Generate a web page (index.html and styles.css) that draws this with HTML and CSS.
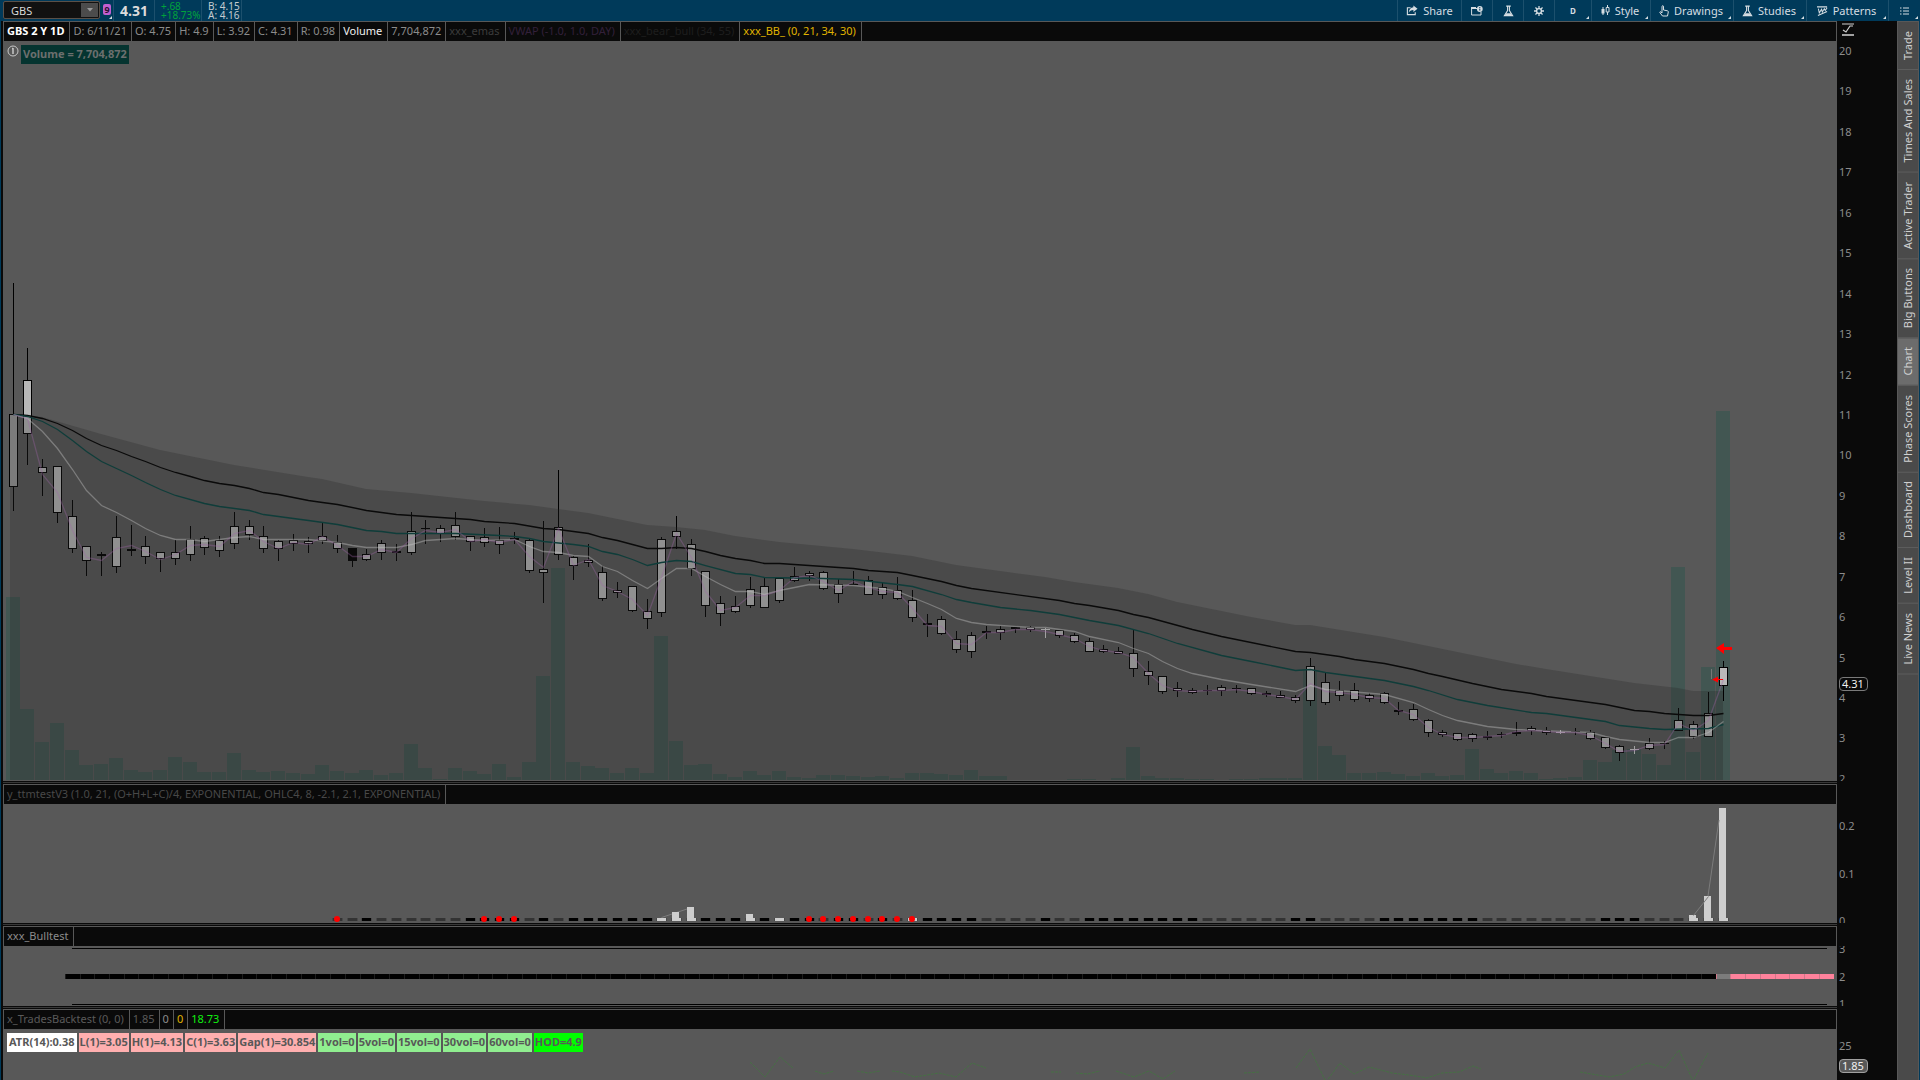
FILE: index.html
```html
<!DOCTYPE html>
<html lang="en">
<head>
    <meta charset="UTF-8">
    <meta name="viewport" content="width=device-width, initial-scale=1.0">
    <title>GBS Chart</title>
    <link rel="stylesheet" href="styles.css">
</head>
<body>
    <header class="toolbar">
        <div class="symbol-box">
            <input type="text" id="symbol" value="GBS" aria-label="Symbol">
            <button class="symbol-drop" aria-label="Recent symbols">
                <svg width="6" height="4" viewBox="0 0 6 4"><path d="M0 0h6L3 3.500z" fill="#9a9a9a"/></svg>
            </button>
        </div>
        <button class="link-color corner" aria-label="Link group 9"><span>9</span></button>
        <div class="quote last">4.31</div>
        <div class="quote change"><span>+.68</span><span>+18.73%</span></div>
        <div class="quote bidask"><span>B: 4.15</span><span>A: 4.16</span></div>

        <nav class="tools">
            <button class="tool share">
                <svg width="12" height="11" viewBox="0 0 13 11"><path d="M5 2.500H1.500v7.500h8.500V7.500" fill="none" stroke="#d5dde2" stroke-width="1.200"/><path d="M8 0l4.500 3.500L8 7V5C5.500 5 4 6 3 8c0-3.500 2-5.500 5-6z" fill="#d5dde2"/></svg>
                Share
            </button>
            <button class="tool" aria-label="Detach">
                <svg width="12" height="10" viewBox="0 0 12 10"><path d="M6 2.500H.6v6.500h9.400V6" fill="none" stroke="#d5dde2"/><path d="M0 1h5v2H0z" fill="#d5dde2"/><circle cx="8.800" cy="3" r="2.900" fill="#d5dde2"/><path d="M8.800 1v1M8.800 2.600v2" stroke="#003a5a"/></svg>
            </button>
            <button class="tool" aria-label="Edit studies">
                <svg width="11" height="12" viewBox="0 0 12 12"><path d="M3.500.7h5M5 1v4.500L1.500 11h9L7 5.500V1" fill="none" stroke="#d5dde2" stroke-width="1.200"/><path d="M3.600 8.500h4.800l2.100 3h-9z" fill="#d5dde2"/></svg>
            </button>
            <button class="tool" aria-label="Settings">
                <svg width="10" height="10" viewBox="0 0 11 11"><path d="M5.500 0v11M0 5.500h11M1.600 1.600l7.800 7.800M9.400 1.600L1.600 9.400" stroke="#d5dde2" stroke-width="1.400"/><circle cx="5.500" cy="5.500" r="3.400" fill="#d5dde2"/><circle cx="5.500" cy="5.500" r="1.900" fill="#003a5a"/></svg>
            </button>
            <button class="tool timeframe corner">D</button>
            <button class="tool style corner">
                <svg width="9" height="11" viewBox="0 0 9 11"><path d="M2 2v8M6.500 0v10" stroke="#d5dde2"/><path d="M.5 4h3v4.500h-3z" fill="#d5dde2"/><path d="M5.200 2.500h2.800v4.500H5.200z" fill="#003a5a" stroke="#d5dde2"/></svg>
                Style
            </button>
            <button class="tool drawings corner">
                <svg width="10" height="12" viewBox="0 0 10 12"><path d="M3 8V1.200q.8-1 1.500 0V5l4 .8q1 .3.8 1.200L8.500 11h-5L.8 7.500q0-1 1-.7z" fill="none" stroke="#d5dde2"/></svg>
                Drawings
            </button>
            <button class="tool studies corner">
                <svg width="11" height="12" viewBox="0 0 12 12"><path d="M3.500.7h5M5 1v4.500L1.500 11h9L7 5.500V1" fill="none" stroke="#d5dde2" stroke-width="1.200"/><path d="M3.600 8.500h4.800l2.100 3h-9z" fill="#d5dde2"/></svg>
                Studies
            </button>
            <button class="tool patterns corner">
                <svg width="11" height="12" viewBox="0 0 12 12"><path d="M0 1.500h11M1 11L11 6.500M1.500 3.500l1 4.500 2.500-4 .8 3 2.200-3.500 1 2L11 2.500" fill="none" stroke="#d5dde2" stroke-width="1.100"/></svg>
                Patterns
            </button>
            <button class="tool corner" aria-label="Menu">
                <svg width="9" height="8" viewBox="0 0 9 8"><path d="M0 1h1.500M3 1h6M0 4h1.500M3 4h6M0 7h1.500M3 7h6" stroke="#d5dde2"/></svg>
            </button>
        </nav>
    </header>

    <div class="workspace">
        <main class="panes">
            <section class="pane price-pane">
                <div class="plot">
                    <div class="legend">
                        <span class="title">GBS 2 Y 1D</span>
                        <span class="value">D: 6/11/21</span>
                        <span class="value">O: 4.75</span>
                        <span class="value">H: 4.9</span>
                        <span class="value">L: 3.92</span>
                        <span class="value">C: 4.31</span>
                        <span class="value">R: 0.98</span>
                        <span class="white">Volume</span>
                        <span class="value">7,704,872</span>
                        <span class="emas">xxx_emas</span>
                        <span class="vwap">VWAP (-1.0, 1.0, DAY)</span>
                        <span class="bear">xxx_bear_bull (34, 55)</span>
                        <span class="yellow">xxx_BB_ (0, 21, 34, 30)</span>
                    </div>
                    <div class="canvas">
                        <svg id="price" viewBox="3 41 1834 740" preserveAspectRatio="none"></svg>
                        <div class="overlay">
                            <svg width="12" height="12" viewBox="0 0 12 12"><circle cx="6" cy="6" r="5" fill="none" stroke="#c8c8c8"/><path d="M6 3v6M5 3.500h1" stroke="#c8c8c8" stroke-width="1.500"/></svg>
                            <span class="volume-label">Volume = 7,704,872</span>
                        </div>
                    </div>
                </div>
                <div class="axis">
                    <button class="axis-fit" aria-label="Fit scale">
                        <svg width="12" height="13" viewBox="0 0 12 13"><path d="M0 1h12" stroke="#d0d0d0"/><path d="M0 12h12" stroke="#a0a0a0" stroke-width="2"/><path d="M1 7l3 2 4-6h3" fill="none" stroke="#d0d0d0" stroke-width="1.200"/></svg>
                    </button>
                    <div class="scale">
                        <span>20</span><span>19</span><span>18</span><span>17</span><span>16</span><span>15</span><span>14</span><span>13</span><span>12</span><span>11</span><span>10</span><span>9</span><span>8</span><span>7</span><span>6</span><span>5</span><span>4</span><span>3</span><span>2</span>
                        <b class="price-tag">4.31</b>
                    </div>
                </div>
            </section>

            <section class="pane ttm-pane">
                <div class="plot">
                    <div class="legend">
                        <span class="dim">y_ttmtestV3 (1.0, 21, (O+H+L+C)/4, EXPONENTIAL, OHLC4, 8, -2.1, 2.1, EXPONENTIAL)</span>
                    </div>
                    <div class="canvas">
                        <svg id="ttm" viewBox="3 804 1834 119" preserveAspectRatio="none"></svg>
                    </div>
                </div>
                <div class="axis">
                    <div class="scale"><span>0.2</span><span>0.1</span><span>0</span></div>
                </div>
            </section>

            <section class="pane bull-pane">
                <div class="plot">
                    <div class="legend"><span>xxx_Bulltest</span></div>
                    <div class="canvas">
                        <svg id="bull" viewBox="3 946 1834 60" preserveAspectRatio="none"></svg>
                    </div>
                </div>
                <div class="axis">
                    <div class="scale"><span>3</span><span>2</span><span>1</span></div>
                </div>
            </section>

            <section class="pane trades-pane">
                <div class="plot">
                    <div class="legend">
                        <span class="mid">x_TradesBacktest (0, 0)</span>
                        <span class="mid value">1.85</span>
                        <span class="value">0</span>
                        <span class="yellow value">0</span>
                        <span class="green">18.73</span>
                    </div>
                    <div class="canvas">
                        <svg id="trades" viewBox="3 1029 1834 51" preserveAspectRatio="none"></svg>
                        <div class="labels">
                            <span class="atr">ATR(14):0.38</span>
                            <span class="pink">L(1)=3.05</span>
                            <span class="pink">H(1)=4.13</span>
                            <span class="pink">C(1)=3.63</span>
                            <span class="pink">Gap(1)=30.854</span>
                            <span class="vol">1vol=0</span>
                            <span class="vol">5vol=0</span>
                            <span class="vol">15vol=0</span>
                            <span class="vol">30vol=0</span>
                            <span class="vol">60vol=0</span>
                            <span class="hod">HOD=4.9</span>
                        </div>
                    </div>
                </div>
                <div class="axis">
                    <div class="scale"><span>25</span><b class="price-tag">1.85</b></div>
                </div>
            </section>
        </main>

        <nav class="side-tabs">
            <button>Trade</button>
            <button>Times And Sales</button>
            <button>Active Trader</button>
            <button>Big Buttons</button>
            <button class="active">Chart</button>
            <button>Phase Scores</button>
            <button>Dashboard</button>
            <button>Level II</button>
            <button>Live News</button>
        </nav>
    </div>

    <script src="chart.js"></script>
</body>
</html>
```

FILE: styles.css
```css
* {
    box-sizing: border-box;
}

body {
    margin: 0;
    height: 100vh;
    display: flex;
    flex-direction: column;
    overflow: hidden;
    background-color: #003a5a;
    font-family: "Noto Sans", "Open Sans", sans-serif;
    font-size: 11px;
    color: #8c8c8c;
}

button {
    font-family: inherit;
    font-size: 11px;
    color: #d5dde2;
    background: none;
    border: none;
    padding: 0;
    cursor: pointer;
}

/* top toolbar */
.toolbar {
    display: flex;
    height: 21px;
    flex: none;
    padding-left: 3px;
}

.symbol-box {
    display: flex;
    width: 97px;
    height: 18px;
    margin-top: 1px;
    border: 1px solid #5a5048;
    border-radius: 2px;
    background-color: #111;
}

.symbol-box input {
    flex: 1;
    min-width: 0;
    padding: 0 0 0 7px;
    border: none;
    background: none;
    color: #d8d8d8;
    font-family: inherit;
    font-size: 11px;
}

.symbol-drop {
    display: flex;
    align-items: center;
    justify-content: center;
    width: 17px;
    margin: 1px;
    background-color: #4c4c4c;
}

.corner {
    position: relative;
}

.corner::after {
    content: "";
    position: absolute;
    right: 2px;
    bottom: 2px;
    border-left: 3px solid transparent;
    border-bottom: 3px solid #d5dde2;
}

.link-color {
    width: 14px;
    border-right: 1px solid #1c506d;
    text-align: left;
    padding-left: 3px;
}

.link-color::after {
    right: 1px;
}

.link-color span {
    display: block;
    width: 8px;
    height: 11px;
    margin-bottom: 2px;
    border-radius: 2px;
    background-color: #c05fd0;
    color: #2a1030;
    font-size: 9px;
    font-weight: bold;
    line-height: 11px;
    text-align: center;
}

.quote {
    display: flex;
    flex-direction: column;
    justify-content: center;
    padding-left: 6px;
    border-right: 1px solid #1c506d;
    font-size: 10px;
    line-height: 9px;
    white-space: nowrap;
    color: #c4ccd0;
}

.last {
    width: 41px;
    font-size: 14px;
    font-weight: bold;
    color: #dcdcdc;
}

.change {
    width: 47px;
    color: #00a33c;
}

.bidask {
    width: 40px;
}

.tools {
    display: flex;
    margin-left: auto;
}

.tool {
    display: flex;
    align-items: center;
    justify-content: center;
    gap: 5px;
    width: 31px;
    border-left: 1px solid #1c506d;
}

.tool:last-child {
    width: 32px;
}

.tool.share {
    width: 64px;
}

.tool.timeframe {
    width: 37px;
    font-size: 8px;
    font-weight: bold;
}

.tool.style {
    width: 59px;
}

.tool.drawings {
    width: 83px;
}

.tool.studies {
    width: 73px;
}

.tool.patterns {
    width: 82px;
}

.style, .drawings, .studies, .patterns {
    padding-right: 2px;
}

/* panes */
.workspace {
    display: flex;
    flex: 1;
    min-height: 0;
    margin: 0 1px;
}

.panes {
    display: flex;
    flex-direction: column;
    flex: 1;
    min-width: 0;
    padding-left: 2px;
    background-color: #0a0a0a;
}

.pane {
    display: flex;
    min-height: 0;
    overflow: hidden;
}

.price-pane {
    flex: 740 0 20px;
}

.ttm-pane {
    flex: 119 0 23px;
}

.bull-pane {
    flex: 60 0 23px;
}

.trades-pane {
    flex: 51 0 23px;
}

.plot {
    display: flex;
    flex-direction: column;
    flex: 1;
    min-width: 0;
}

.pane + .pane .plot {
    border-top: 3px double #0a0a0a;
    background-color: #383838;
}

.legend {
    display: flex;
    flex: none;
    height: 20px;
    border: 1px solid #585858;
    border-bottom: none;
    background-color: #0a0a0a;
    line-height: 18px;
    white-space: nowrap;
    overflow: hidden;
}

.legend span {
    padding: 0 5px 0 3px;
    border-right: 1px solid #585858;
}

.legend .value {
    padding-right: 4px;
}

.legend .title {
    color: #fff;
    font-weight: bold;
}

.legend .white {
    color: #f0f0f0;
}

.legend .emas {
    color: #3c3c3c;
}

.legend .vwap {
    color: #33203a;
}

.legend .bear {
    color: #1e1e1e;
}

.legend .yellow {
    color: #e0b400;
}

.legend .dim {
    color: #484848;
}

.legend .mid {
    color: #5a5a5a;
}

.legend .green {
    color: #10f010;
}

.canvas {
    position: relative;
    flex: 1;
    min-height: 0;
    background-color: #585858;
}

.canvas > svg {
    display: block;
    width: 100%;
    height: 100%;
}

.overlay {
    position: absolute;
    top: 4px;
    left: 4px;
    display: flex;
    gap: 2px;
}

.volume-label {
    padding: 0 2px 1px;
    background-color: #053430;
    color: #6c6f6e;
    font-weight: bold;
    line-height: 18px;
}

/* price scales */
.axis {
    display: flex;
    flex-direction: column;
    width: 60px;
    flex: none;
    padding-top: 23px;
}

.price-pane .axis {
    padding-top: 0;
}

.axis-fit {
    height: 16px;
    margin-bottom: 4px;
    text-align: left;
    padding-left: 5px;
}

.axis-fit svg {
    display: block;
}

.scale {
    position: relative;
    display: flex;
    flex-direction: column;
    justify-content: space-between;
    flex: 1;
    min-height: 0;
    padding: 2px 0 0 2px;
    overflow: hidden;
    line-height: 16px;
}

.scale span:last-of-type {
    margin-bottom: -6px;
}

.ttm-pane .scale {
    padding-top: 14px;
}

.bull-pane .scale {
    padding-top: 0;
}

.bull-pane .scale span:first-child {
    margin-top: -5px;
}

.trades-pane .scale {
    padding-top: 9px;
}

.price-tag {
    position: absolute;
    left: 2px;
    top: 86%;
    width: 29px;
    height: 14px;
    padding-left: 2px;
    border: 1px solid #7a7a7a;
    border-radius: 4px;
    background-color: #0a0a0a;
    color: #f0f0f0;
    font-weight: normal;
    line-height: 12px;
}

.trades-pane .price-tag {
    top: 58%;
    border-color: #a0a0a0;
    background-color: #585858;
}

/* colored label row */
.labels {
    position: absolute;
    top: 4px;
    left: 4px;
    display: flex;
    gap: 2px;
    color: #585858;
    font-weight: bold;
    line-height: 18px;
    white-space: nowrap;
}

.labels span {
    padding: 0 1px 1px;
}

.labels .atr {
    padding: 0 2px 1px;
    background-color: #fff;
}

.pink {
    background-color: #ffafaf;
}

.vol {
    background-color: #90ee90;
}

.hod {
    background-color: #00ff00;
}

/* gadget tabs on the right */
.side-tabs {
    display: flex;
    flex-direction: column;
    width: 22px;
    flex: none;
    border: 1px solid #585858;
    border-bottom: none;
    background-color: #4a4a4a;
}

.side-tabs button {
    writing-mode: vertical-rl;
    transform: rotate(180deg);
    width: 20px;
    padding: 9px 0;
    border-top: 1px solid #5e5e5e;
    color: #d0d0d0;
    line-height: 20px;
    text-align: center;
}

.side-tabs .active {
    background-color: #6c6c6c;
}
```

FILE: chart.js
```js
// one row per day: body top, body bottom, high, low, volume top
const bars = [
    [414,487,283,511,597],[380,434,348,465,709],[467,473,459,496,742],[466,513,466,523,723],
    [516,549,500,553,750],[546,561,546,576,765],[554,556,552,576,764],[537,567,516,573,758],
    [549,551,525,556,770],[546,557,536,564,772],[552,559,552,572,770],[552,559,540,565,757],
    [539,555,526,561,762],[538,548,536,555,772],[540,551,536,557,772],[526,544,512,549,753],
    [526,535,520,540,770],[536,549,526,553,772],[541,549,540,561,771],[540,544,534,551,773],
    [541,544,537,553,774],[536,541,522,544,765],[542,549,535,553,771],[548,561,548,567,773],
    [554,560,549,561,770],[543,553,540,560,775],[551,553,544,561,773],[531,553,512,555,744],
    [528,529,520,544,768],[528,534,525,542,779],[525,537,512,540,768],[536,542,536,551,771],
    [537,543,528,547,774],[540,545,527,554,764],[538,540,532,544,777],[540,571,539,573,762],
    [569,573,521,603,676],[527,555,470,560,568],[557,566,556,580,762],[560,563,544,567,766],
    [572,599,566,601,768],[590,593,582,598,773],[586,611,586,612,768],[611,619,599,629,773],
    [539,613,537,617,636],[531,537,516,549,741],[544,569,539,576,765],[571,606,571,617,764],
    [603,614,596,626,774],[606,612,596,613,777],[589,606,577,608,771],[586,608,578,608,775],
    [578,601,578,603,771],[576,581,567,582,777],[573,576,571,581,778],[572,589,571,590,775],
    [584,594,579,603,775],[584,585,571,585,776],[580,595,576,595,777],[587,595,583,599,776],
    [590,599,577,600,778],[600,618,590,622,773],[623,625,614,637,773],[619,634,616,635,774],
    [639,650,631,653,775],[635,652,632,658,770],[631,633,626,639,776],[629,633,626,640,776],
    [627,629,627,633,780],[627,630,626,632,780],[629,630,628,638,780],[630,636,630,638,780],
    [635,642,633,643,779],[641,652,638,652,779],[649,652,645,653,780],[651,654,647,654,778],
    [653,669,630,677,747],[671,676,661,685,776],[676,692,676,694,778],[688,691,682,697,778],
    [690,693,688,694,779],[690,691,685,695,779],[687,691,685,696,780],[688,689,685,693,779],
    [688,694,688,695,779],[693,695,691,697,778],[695,698,691,698,778],[697,701,695,703,778],
    [666,701,658,706,670],[682,703,672,705,746],[690,696,681,701,755],[690,700,683,702,773],
    [695,699,693,702,773],[693,703,692,704,772],[710,712,702,715,774],[709,720,704,721,776],
    [720,733,719,737,773],[732,735,730,737,776],[733,740,733,741,775],[734,739,733,742,749],
    [736,738,731,740,769],[734,735,732,738,773],[732,734,722,736,771],[728,731,726,735,773],
    [730,733,727,735,779],[732,733,730,734,778],[731,732,728,735,777],[732,739,730,740,760],
    [737,748,737,749,762],[746,753,745,761,750],[749,750,746,754,749],[743,749,738,750,754],
    [743,744,741,749,765],[720,731,708,731,567],[724,737,721,739,752],[713,737,692,737,667],
    [667,686,661,701,411]
];
const lightBars = [70, 105, 110];

// [bar, y] pairs
const bandTop = [[0,414],[1,415],[2,417],[6,434],[10,450],[15,465],[20,477],[21,479],[24,489],[27,493],[32,501],
    [35,505],[37,509],[39,513],[43,525],[45,527],[47,530],[49,536],[52,542],[57,549],[61,556],[64,565],[67,571],
    [70,577],[72,582],[75,588],[77,594],[79,602],[84,617],[87,625],[88,625],[93,637],[96,646],[99,655],[102,664],
    [104,669],[107,676],[110,683],[113,688],[114,691],[116,691]];
const slow = [[0,414],[1,415],[2,418],[3,423],[4,430],[5,438],[6,445],[7,450],[8,456],[9,461],[10,467],[11,472],
    [12,476],[13,480],[14,483],[15,485],[16,488],[17,492],[18,494],[19,497],[20,500],[21,502],[22,504],[24,510],
    [26,514],[27,515],[30,518],[31,519],[32,521],[34,523],[36,528],[37,529],[39,533],[40,537],[41,540],[42,544],
    [43,548],[44,548],[45,547],[46,548],[47,551],[48,555],[49,558],[50,560],[51,563],[52,563],[57,568],[58,570],
    [60,572],[61,575],[63,581],[64,585],[65,588],[71,600],[72,603],[73,605],[75,610],[76,614],[77,617],[80,629],
    [82,636],[87,651],[88,652],[90,656],[91,659],[93,663],[95,669],[96,673],[97,676],[99,683],[101,689],[103,693],
    [104,696],[108,704],[110,710],[111,711],[112,713],[114,715],[115,715],[116,713]];
const middle = [[0,414],[1,416],[2,421],[3,429],[4,440],[5,451],[6,461],[7,468],[8,475],[9,482],[10,489],[11,495],
    [13,503],[14,506],[16,510],[17,514],[20,520],[22,524],[24,530],[25,531],[26,533],[30,533],[33,535],[34,536],
    [35,538],[36,541],[38,544],[39,546],[40,551],[41,554],[42,559],[43,565],[44,562],[45,560],[46,561],[47,565],
    [49,573],[50,574],[51,577],[55,578],[57,579],[60,584],[61,586],[63,594],[64,599],[65,602],[67,607],[69,610],
    [71,614],[73,620],[75,625],[77,633],[79,643],[82,655],[84,661],[87,670],[88,669],[89,672],[93,680],[95,686],
    [96,690],[98,699],[100,705],[103,712],[104,713],[108,721],[109,725],[111,728],[112,729],[115,728],[116,724]];
const fast = [[0,414],[1,418],[2,431],[3,448],[4,469],[5,490],[6,505],[7,512],[8,520],[9,528],[10,535],[11,539],
    [12,539],[13,541],[15,537],[16,536],[17,539],[20,539],[22,542],[23,545],[24,547],[26,547],[27,544],[28,540],
    [30,538],[32,540],[34,539],[35,546],[36,551],[37,552],[38,555],[39,556],[40,566],[41,571],[42,580],[43,588],
    [44,578],[45,568],[46,568],[47,576],[48,584],[49,591],[50,591],[51,594],[52,590],[54,584],[57,585],[59,588],
    [60,591],[61,597],[62,603],[63,609],[64,618],[65,622],[66,624],[69,627],[70,627],[72,631],[73,636],[75,642],
    [76,648],[77,653],[78,661],[79,668],[80,673],[82,679],[84,684],[87,691],[88,685],[89,689],[93,694],[95,702],
    [96,709],[97,715],[98,720],[100,726],[102,729],[107,732],[108,736],[109,739],[111,742],[112,742],[113,737],
    [114,737],[115,732],[116,721]];

const barX = i => 13.2 + 14.74 * i;
const px = i => Math.floor(barX(i));

function rect(x, y, w, h, fill) {
    return `<rect x="${x}" y="${y}" width="${w}" height="${h}" fill="${fill}" shape-rendering="crispEdges"/>`;
}

function line(pairs, color, width = 1) {
    const points = pairs.map(([i, y]) => `${px(i) + 0.5},${y + 0.5}`).join(" ");
    return `<polyline points="${points}" fill="none" stroke="${color}" stroke-width="${width}"/>`;
}

function drawPrice() {
    let out = "";
    bars.forEach((b, i) => {
        out += rect(px(i) - 7, b[4], 14, 780 - b[4], "#425652");
    });
    bars.forEach(([top, bottom, high, low], i) => {
        const x = px(i);
        const ink = lightBars.includes(i) ? "#d0d0d0" : "#000";
        out += rect(x, high, 1, low - high, ink);
        out += rect(x - 4, top, 9, bottom - top, ink);
        if (bottom - top > 2 && i !== 23) {
            out += rect(x - 3, top + 1, 7, bottom - top - 2, i === 0 ? "#9c9c9c" : "#b8b8b8");
        }
    });
    const band = bandTop.map(([i, y]) => `${px(i)},${y}`).join(" ");
    out += `<polygon points="10,414 ${band} 1723,780 10,780" fill="rgba(36,36,36,0.27)"/>`;
    out += line(slow, "#0a0a0a", 1.3);
    out += line(middle, "#0f3d3a", 1.3);
    out += line(fast, "rgba(200,200,200,0.4)", 1.3);
    const typical = bars.map((b, i) => [i, i < 2 ? 414 + i * 4 : Math.round((b[0] + b[1] + b[2] + b[3]) / 4)]);
    out += line(typical, "rgba(160,100,170,0.35)", 1.3);
    // sell markers
    out += '<path d="M1716 648l8-5v4h8v3h-8v4z" fill="#f00"/>';
    out += '<path d="M1711.500 669v10" stroke="#777"/><path d="M1712 679.500l6-3v2.500h5v1h-5v2.500z" fill="#f00"/>';
    document.getElementById("price").innerHTML = out;
}

function drawTtm() {
    // k = black, g = gray, w = white, starting at bar 22
    const dash = "ggkggggggkkkkgkgkkkkkkwwwkkkwkwkkgkkgkgwkkkkggggkggkkkkkkkkggggggkkggggkkkkkkkggggggggkkkgggwww";
    const colors = { k: "#000", g: "#333", w: "#cecece" };
    const columns = { 45: 912, 46: 907, 50: 914, 114: 915, 115: 896, 116: 808 };
    const dots = [22, 32, 33, 34, 54, 55, 56, 57, 58, 59, 60, 61];
    let out = "";
    [...dash].forEach((c, n) => {
        out += rect(px(n + 22) - 5, 918, 11, 3, "#484848");
        out += rect(px(n + 22) - 4, 918, 9, 3, colors[c]);
    });
    out += line([[44, 917], [45, 912], [46, 907]], "#7c7c7c");
    for (const i in columns) {
        out += rect(px(i) - 4, columns[i], 7, 921 - columns[i], "#cecece");
    }
    out += line([[114, 915], [115, 896]], "#7c7c7c");
    out += '<path d="M1708 896L1719 820" stroke="#7c7c7c"/>';
    dots.forEach(i => {
        out += `<circle cx="${px(i)}" cy="919" r="3" fill="#f00"/>`;
    });
    document.getElementById("ttm").innerHTML = out;
}

function drawBull() {
    let out = rect(72, 948, 1755, 1, "#000") + rect(72, 1004, 1755, 1, "#000");
    for (let i = 4; i < 124; i++) {
        const x = Math.round(barX(i - 0.5));
        const w = Math.round(barX(i + 0.5)) - x;
        const color = i < 116 ? "#000" : i === 116 ? "#7c7c7c" : "#ff829c";
        out += rect(x, 974, w, 5, color);
        out += rect(x, 974, 1, 5, i < 116 ? "#1c1c1c" : "#d0788a");
    }
    document.getElementById("bull").innerHTML = out;
}

function drawTrades() {
    const runs = [
        "750,1062 765,1077 780,1057 793,1068",
        "815,1071 824,1074 834,1071",
        "857,1071 868,1073 880,1071",
        "892,1071 900,1072 915,1077 939,1073 956,1077 972,1063 986,1068",
        "1051,1072 1061,1072",
        "1076,1073 1087,1074 1100,1071",
        "1116,1071 1134,1077 1149,1071 1163,1079 1175,1071",
        "1244,1073 1260,1072",
        "1296,1068 1310,1049 1326,1082 1340,1063 1354,1074 1369,1067 1392,1073 1409,1075 1427,1078 1442,1073 1459,1072 1473,1066 1481,1069",
        "1580,1072 1609,1077 1624,1074 1635,1067 1648,1063 1665,1068 1679,1050 1693,1081 1708,1053"
    ];
    document.getElementById("trades").innerHTML = runs.map(points =>
        `<polyline points="${points}" fill="none" stroke="#467044" stroke-dasharray="3 1"/>`
    ).join("");
}

drawPrice();
drawTtm();
drawBull();
drawTrades();
```
